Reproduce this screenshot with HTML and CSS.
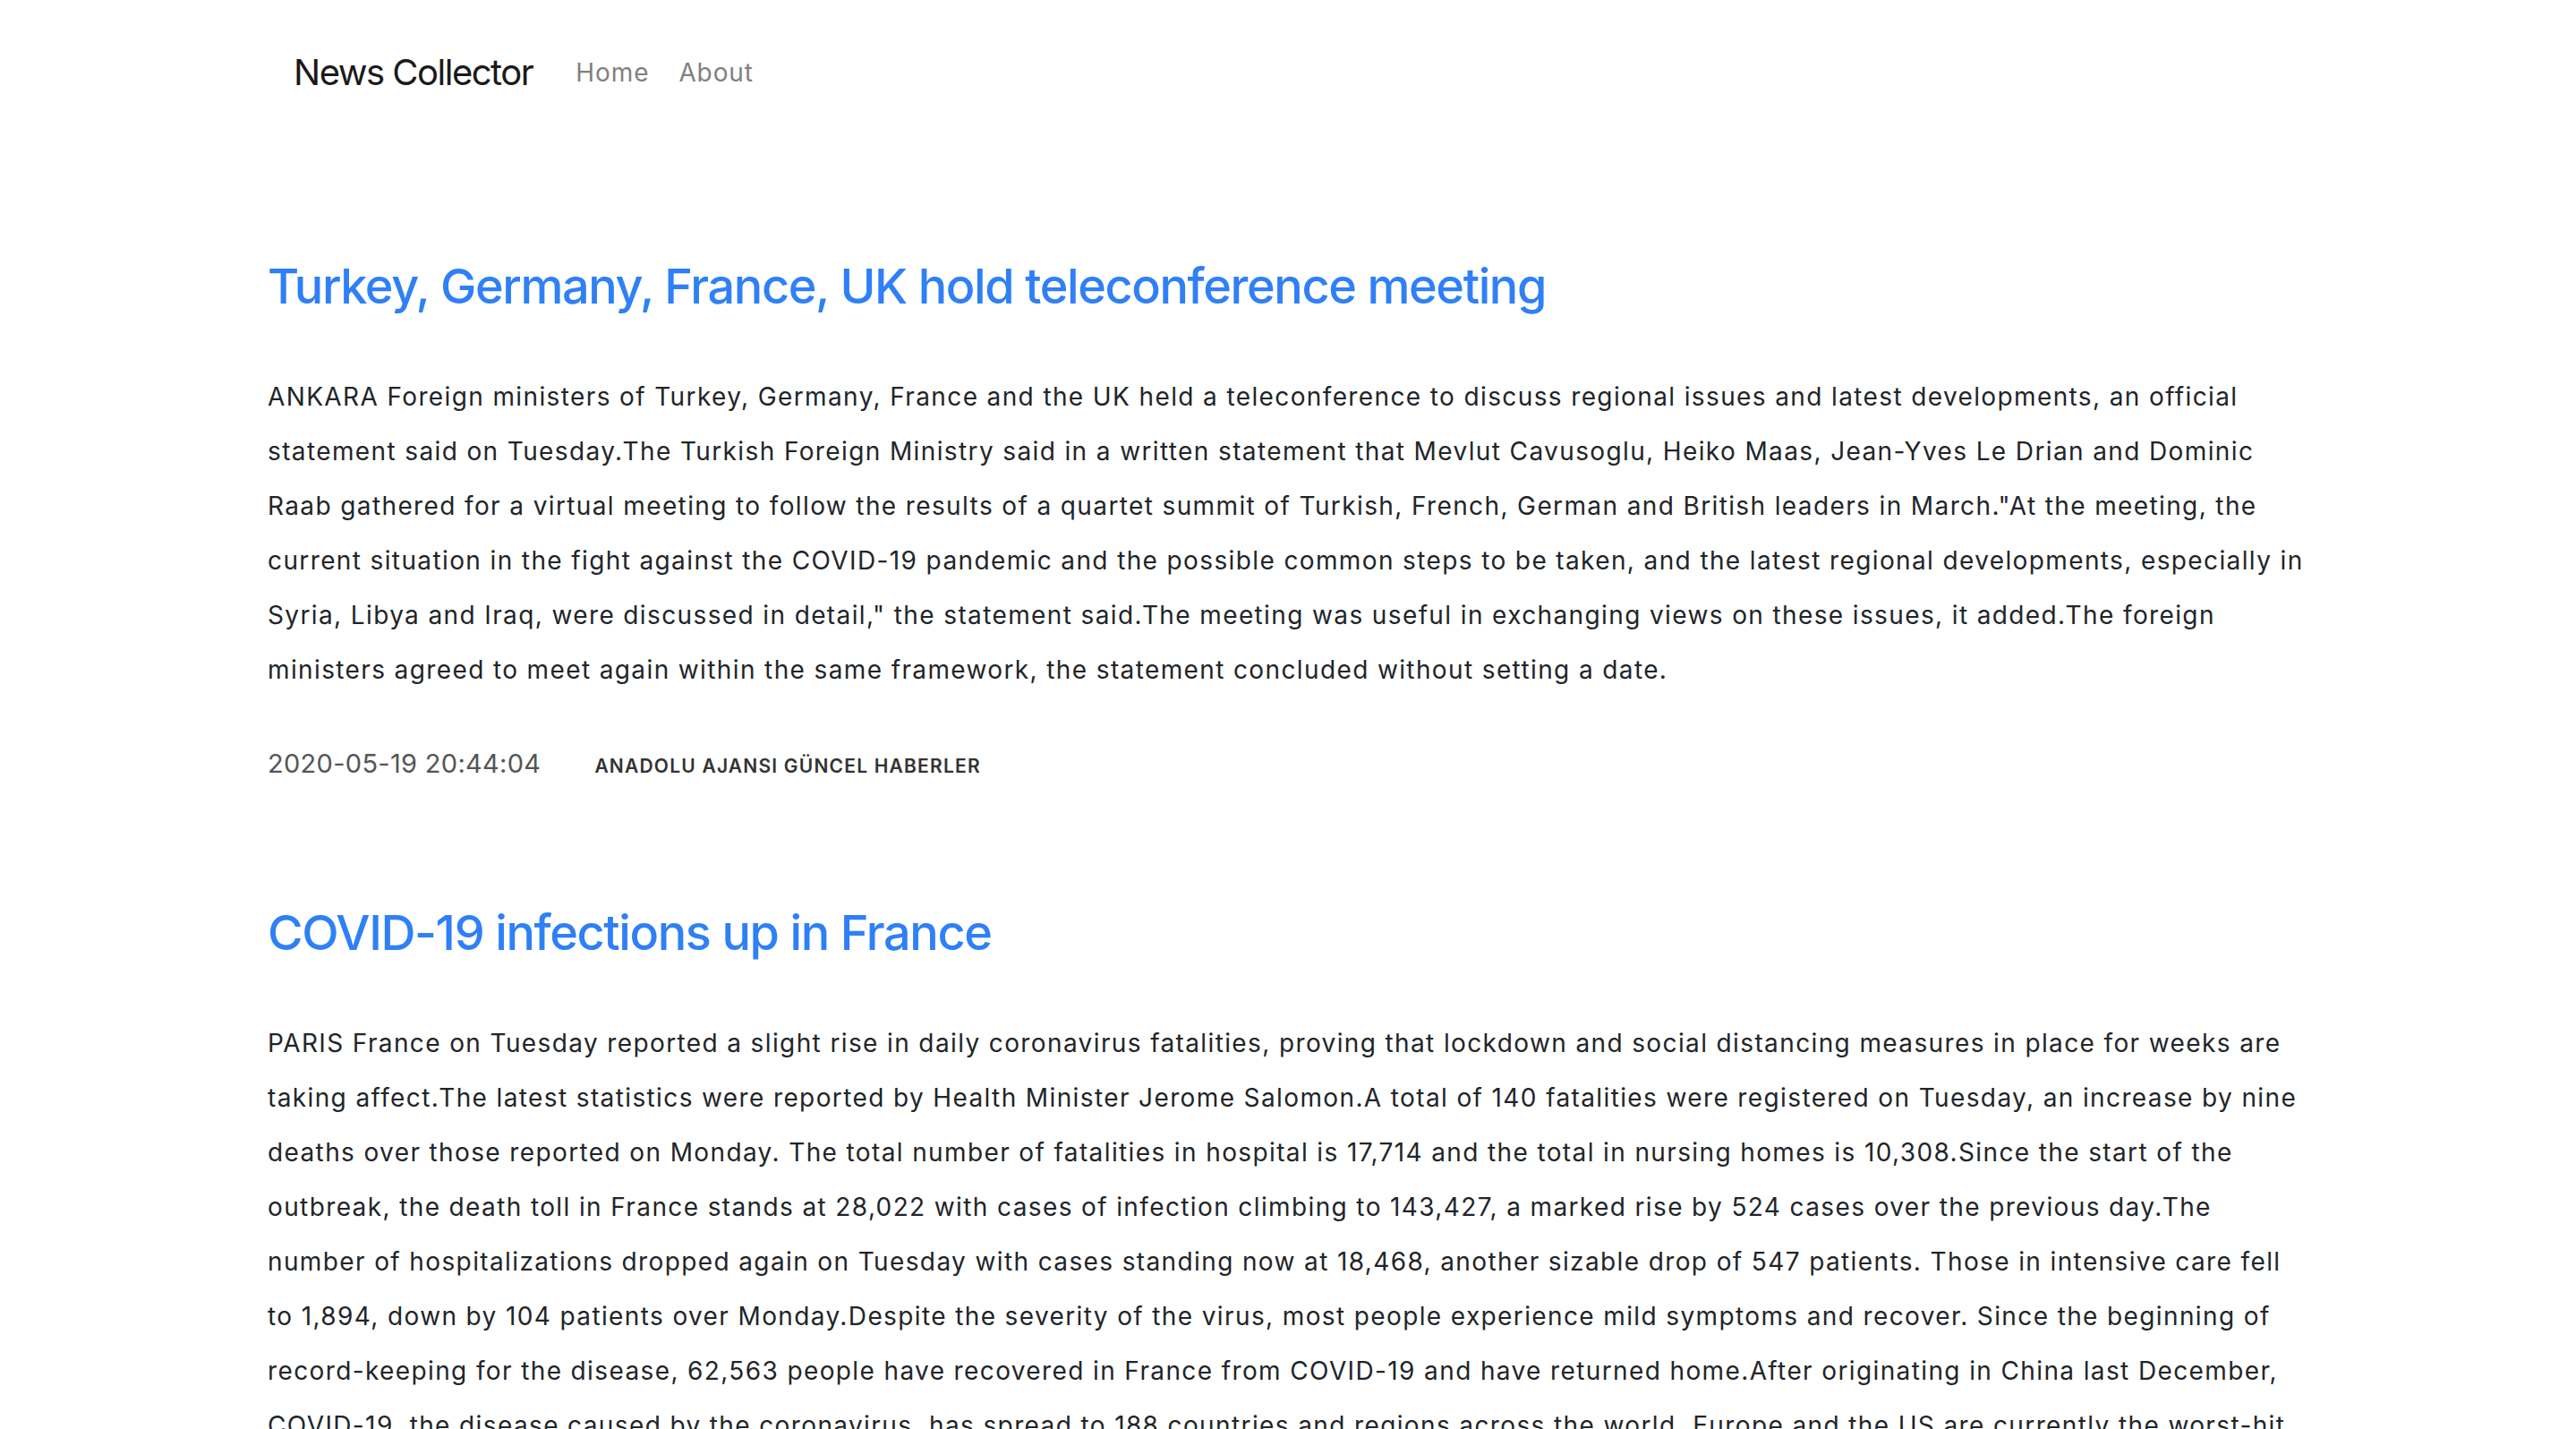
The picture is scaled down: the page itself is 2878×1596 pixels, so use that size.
FILE: index.html
```html
<!DOCTYPE html>
<html lang="en">
<head>
<meta charset="utf-8">
<title>News Collector</title>
<link rel="stylesheet" href="styles.css">
</head>
<body>
<nav class="navbar">
  <a class="brand" href="#">News Collector</a>
  <a class="nav-link" href="#">Home</a>
  <a class="nav-link" href="#">About</a>
</nav>
<main class="container">
  <article class="post">
    <h2 class="post-title"><a href="#">Turkey, Germany, France, UK hold teleconference meeting</a></h2>
    <p class="post-body">ANKARA Foreign ministers of Turkey, Germany, France and the UK held a teleconference to discuss regional issues and latest developments, an official statement said on Tuesday.The Turkish Foreign Ministry said in a written statement that Mevlut Cavusoglu, Heiko Maas, Jean-Yves Le Drian and Dominic Raab gathered for a virtual meeting to follow the results of a quartet summit of Turkish, French, German and British leaders in March."At the meeting, the current situation in the fight against the COVID-19 pandemic and the possible common steps to be taken, and the latest regional developments, especially in Syria, Libya and Iraq, were discussed in detail," the statement said.The meeting was useful in exchanging views on these issues, it added.The foreign ministers agreed to meet again within the same framework, the statement concluded without setting a date.</p>
    <div class="post-meta">
      <span class="post-date">2020-05-19 20:44:04</span>
      <span class="post-source">ANADOLU AJANSI GÜNCEL HABERLER</span>
    </div>
  </article>
  <article class="post">
    <h2 class="post-title"><a href="#">COVID-19 infections up in France</a></h2>
    <p class="post-body">PARIS France on Tuesday reported a slight rise in daily coronavirus fatalities, proving that lockdown and social distancing measures in place for weeks are taking affect.The latest statistics were reported by Health Minister Jerome Salomon.A total of 140 fatalities were registered on Tuesday, an increase by nine deaths over those reported on Monday. The total number of fatalities in hospital is 17,714 and the total in nursing homes is 10,308.Since the start of the outbreak, the death toll in France stands at 28,022 with cases of infection climbing to 143,427, a marked rise by 524 cases over the previous day.The number of hospitalizations dropped again on Tuesday with cases standing now at 18,468, another sizable drop of 547 patients. Those in intensive care fell to 1,894, down by 104 patients over Monday.Despite the severity of the virus, most people experience mild symptoms and recover. Since the beginning of record-keeping for the disease, 62,563 people have recovered in France from COVID-19 and have returned home.After originating in China last December, COVID-19, the disease caused by the coronavirus, has spread to 188 countries and regions across the world. Europe and the US are currently the worst-hit regions.</p>
    <div class="post-meta">
      <span class="post-date">2020-05-19 20:44:04</span>
      <span class="post-source">ANADOLU AJANSI GÜNCEL HABERLER</span>
    </div>
  </article>
</main>
</body>
</html>
```

FILE: styles.css
```css
* { box-sizing: border-box; }
html, body { margin: 0; padding: 0; background: #fff; }
body {
  font-family: Inter, "Noto Sans", "Liberation Sans", sans-serif;
  color: #212529;
}
a { text-decoration: none; }

.navbar {
  display: flex;
  align-items: center;
  padding: 51px 0 0 328px;
  height: 111px;
}
.brand {
  font-size: 40px;
  line-height: 60px;
  color: #1a1a1a;
  margin-right: 48px;
  letter-spacing: -1.5px;
}
.nav-link {
  font-size: 28px;
  line-height: 60px;
  color: #808080;
  margin-right: 33px;
  letter-spacing: 0.9px;
}

.container {
  width: 2281px;
  margin: 0 0 0 299px;
  padding-top: 176px;
}
.post { margin-bottom: 131px; }
.post-title {
  margin: 0;
  font-size: 54px;
  line-height: 65px;
  font-weight: 500;
  letter-spacing: -1.4px;
}
.post-title a { color: #2f80f6; }
.post-body {
  margin: 61px 0 0;
  font-size: 28px;
  line-height: 61px;
  letter-spacing: 1.38px;
  color: #212529;
}
.post-meta {
  margin-top: 52px;
  display: flex;
  align-items: baseline;
  line-height: 44px;
}
.post-date {
  font-size: 29px;
  color: #555;
  margin-right: 60px;
  letter-spacing: 0.3px;
}
.post-source {
  font-size: 21px;
  font-weight: 600;
  color: #333;
  letter-spacing: 1.2px;
  text-transform: uppercase;
}
```
